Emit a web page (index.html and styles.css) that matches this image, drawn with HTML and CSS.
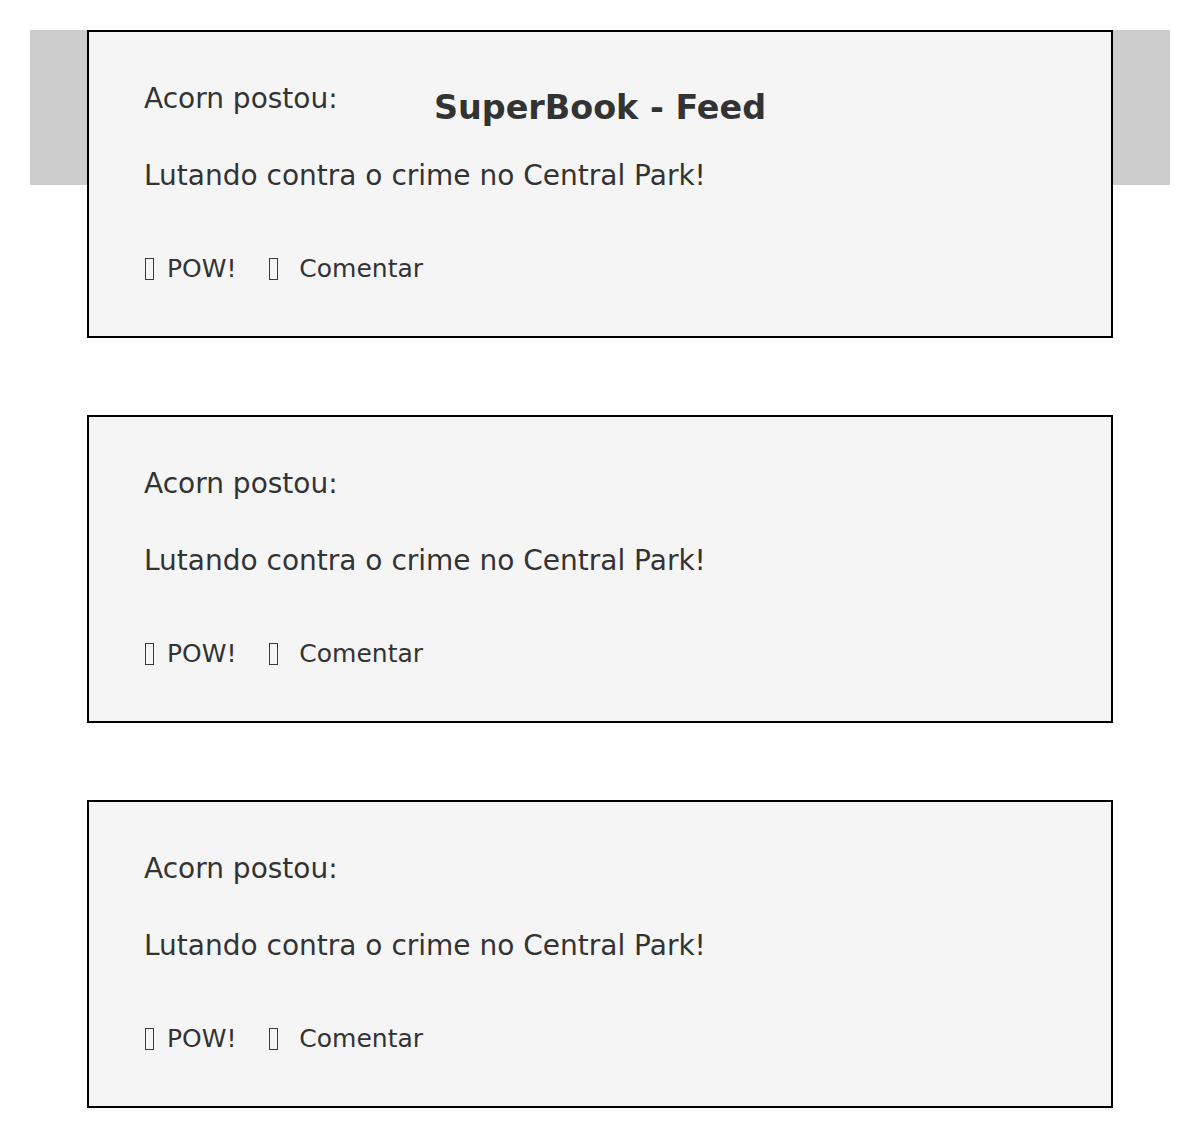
FILE: index.html
```html
<!DOCTYPE html>
<html lang="pt">
<head>
<meta charset="utf-8">
<title>SuperBook - Feed</title>
<link rel="stylesheet" href="styles.css">
</head>
<body>
<header class="topbar">
  <h1 class="title">SuperBook - Feed</h1>
</header>
<main class="feed">
  <article class="post">
    <p class="author">Acorn postou:</p>
    <p class="content">Lutando contra o crime no Central Park!</p>
    <div class="actions">
      <span class="action"><span class="glyph" role="img" aria-label="💥"></span> POW!</span>
      <span class="action"><span class="glyph" role="img" aria-label="💬"></span>&nbsp; Comentar</span>
    </div>
  </article>
  <article class="post">
    <p class="author">Acorn postou:</p>
    <p class="content">Lutando contra o crime no Central Park!</p>
    <div class="actions">
      <span class="action"><span class="glyph" role="img" aria-label="💥"></span> POW!</span>
      <span class="action"><span class="glyph" role="img" aria-label="💬"></span>&nbsp; Comentar</span>
    </div>
  </article>
  <article class="post">
    <p class="author">Acorn postou:</p>
    <p class="content">Lutando contra o crime no Central Park!</p>
    <div class="actions">
      <span class="action"><span class="glyph" role="img" aria-label="💥"></span> POW!</span>
      <span class="action"><span class="glyph" role="img" aria-label="💬"></span>&nbsp; Comentar</span>
    </div>
  </article>
</main>
</body>
</html>
```
FILE: styles.css
```css
html, body {
  background: #ffffff;
}
body {
  margin: 30px;
  font-family: "DejaVu Sans", sans-serif;
  color: #333333;
}
.topbar {
  background: #cccccc;
  height: 155px;
  box-sizing: border-box;
  padding-top: 58px;
  text-align: center;
}
.title {
  margin: 0;
  font-size: 33.4px;
  line-height: 40px;
  font-weight: bold;
  color: #333333;
}
.feed {
  width: 90%;
  margin: -155px auto 0;
}
.post {
  background: #f5f5f5;
  border: 2px solid #000000;
  padding: 50px 55px 53px;
  margin-bottom: 77px;
}
.author {
  margin: 0 0 44px;
  font-size: 28px;
  line-height: 33px;
}
.content {
  margin: 0 0 62px;
  font-size: 28px;
  line-height: 33px;
}
.actions {
  display: flex;
  gap: 32px;
  font-size: 25px;
  line-height: 29px;
}
.glyph {
  display: inline-block;
  box-sizing: border-box;
  width: 9px;
  height: 22px;
  margin: 0 5px 0 1px;
  border: 1px solid #3a3a3a;
  vertical-align: -3px;
}
```
